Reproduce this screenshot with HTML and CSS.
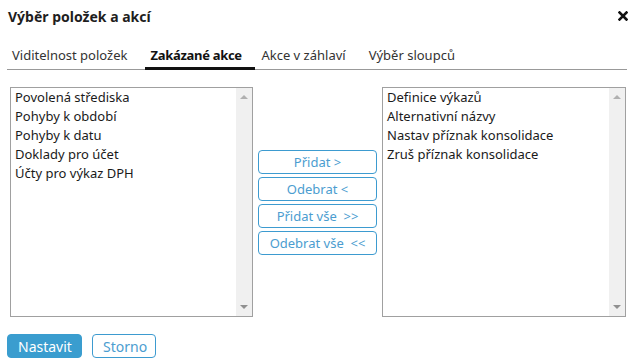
FILE: index.html
```html
<!DOCTYPE html>
<html>
  <head>
    <title>Výběr položek a akcí</title>
    <link rel="stylesheet" href="styles.css">
  </head>
  <body>
    <div class="dialog">
      <div class="dialog-header">
        <div class="dialog-title">Výběr položek a akcí</div>
        <button class="close-button" title="Zavřít">
          <svg width="10" height="10" viewBox="0 0 10 10">
            <path d="M1.5 1.5 L8.5 8.5 M8.5 1.5 L1.5 8.5" stroke="#111" stroke-width="2.6" stroke-linecap="square" />
          </svg>
        </button>
      </div>

      <div class="tabs">
        <div class="tab">Viditelnost položek</div>
        <div class="tab active">Zakázané akce</div>
        <div class="tab">Akce v záhlaví</div>
        <div class="tab">Výběr sloupců</div>
      </div>

      <div class="picker">
        <div class="listbox">
          <div class="list-items">
            <div class="list-item">Povolená střediska</div>
            <div class="list-item">Pohyby k období</div>
            <div class="list-item">Pohyby k datu</div>
            <div class="list-item">Doklady pro účet</div>
            <div class="list-item">Účty pro výkaz DPH</div>
          </div>
          <div class="scrollbar">
            <span class="arrow up"></span>
            <span class="arrow down"></span>
          </div>
        </div>

        <div class="move-buttons">
          <button class="button outline">Přidat &gt;</button>
          <button class="button outline">Odebrat &lt;</button>
          <button class="button outline">Přidat vše&nbsp; &gt;&gt;</button>
          <button class="button outline">Odebrat vše&nbsp; &lt;&lt;</button>
        </div>

        <div class="listbox">
          <div class="list-items">
            <div class="list-item">Definice výkazů</div>
            <div class="list-item">Alternativní názvy</div>
            <div class="list-item">Nastav příznak konsolidace</div>
            <div class="list-item">Zruš příznak konsolidace</div>
          </div>
          <div class="scrollbar">
            <span class="arrow up"></span>
            <span class="arrow down"></span>
          </div>
        </div>
      </div>

      <div class="dialog-footer">
        <button class="button primary">Nastavit</button>
        <button class="button outline cancel">Storno</button>
      </div>
    </div>
  </body>
</html>
```

FILE: styles.css
```css
body {
  margin: 0;
  font-family: "Noto Sans", "Open Sans", sans-serif;
  font-size: 13px;
  color: #222;
  background: #fff;
}

.dialog {
  width: 635px;
  height: 364px;
  box-sizing: border-box;
}

.dialog-header {
  height: 32px;
  display: flex;
  align-items: center;
  justify-content: space-between;
  padding: 0 7px 0 8px;
}

.dialog-title {
  font-size: 14px;
  font-weight: 700;
  color: #1e1e1e;
}

.close-button {
  background: none;
  border: none;
  padding: 0;
  width: 10px;
  height: 10px;
  display: flex;
  cursor: pointer;
}

.tabs {
  display: flex;
  margin: 8px 8px 0 7px;
  border-bottom: 1px solid #999;
}

.tab {
  padding: 3px 5px 0;
  line-height: 24px;
  margin-bottom: -1px;
  margin-right: 13px;
  border-bottom: 3px solid transparent;
  color: #333;
  cursor: pointer;
}

.tab.active {
  font-weight: 700;
  letter-spacing: -0.3px;
  color: #111;
  border-bottom-color: #111;
  width: 110px;
  box-sizing: border-box;
  padding-right: 0;
  margin-right: 1px;
}

.picker {
  display: grid;
  grid-template-columns: 243px 1fr 244px;
  height: 230px;
  margin: 17px 9px 0 10px;
}

.listbox {
  display: flex;
  border: 1px solid #a0a0a0;
  background: #fff;
}

.list-items {
  flex-grow: 1;
  padding-left: 4px;
}

.list-item {
  line-height: 19px;
  color: #1a1a1a;
}

.scrollbar {
  width: 16px;
  background: #f0f0f0;
  display: flex;
  flex-direction: column;
  justify-content: space-between;
  align-items: center;
  padding: 7px 0;
}

.arrow {
  width: 0;
  height: 0;
  border-left: 4px solid transparent;
  border-right: 4px solid transparent;
}

.arrow.up {
  border-bottom: 4px solid #b0b0b0;
}

.arrow.down {
  border-top: 4px solid #909090;
}

.move-buttons {
  display: flex;
  flex-direction: column;
  align-items: center;
  justify-content: center;
  gap: 3px;
}

.button {
  font-family: inherit;
  font-size: 13px;
  height: 24px;
  padding: 0 10px;
  border-radius: 4px;
  cursor: pointer;
}

.button.outline {
  background: #fff;
  border: 1px solid #3d9bd0;
  color: #4b9dd0;
}

.move-buttons .button {
  width: 119px;
}

.button.primary {
  background: #3a9dcf;
  border: 1px solid #3a9dcf;
  color: #fff;
  font-size: 14px;
  width: 75px;
}

.dialog-footer {
  display: flex;
  gap: 10px;
  margin: 17px 0 0 7px;
}

.button.cancel {
  width: 64px;
  font-size: 14px;
}
```
